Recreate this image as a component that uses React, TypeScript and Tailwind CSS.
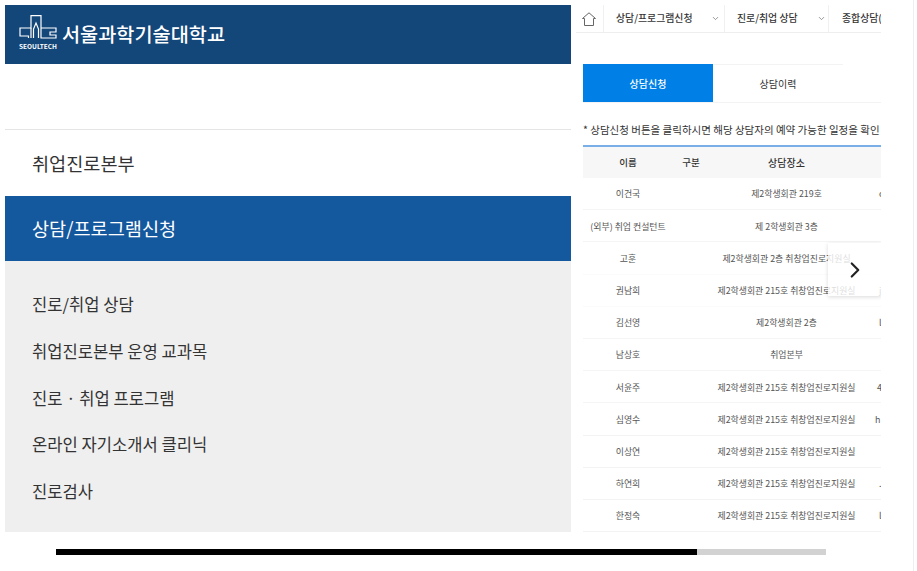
import { ChevronDown, ChevronRight } from "lucide-react";

const subMenus = [
  "진로/취업 상담",
  "취업진로본부 운영 교과목",
  "진로 · 취업 프로그램",
  "온라인 자기소개서 클리닉",
  "진로검사",
];

const rows = [
  { name: "이건국", place: "제2학생회관 219호", extra: "c", pad: "pl-[15px]", line: "border-[#f5f5f5]" },
  { name: "(외부) 취업 컨설턴트", place: "제 2학생회관 3층", extra: "", pad: "pl-0", line: "border-[#f5f5f5]" },
  { name: "고훈", place: "제2학생회관 2층 취창업진로지원실", extra: "", pad: "pl-0", line: "border-[#fbfbfb]" },
  { name: "권남희", place: "제2학생회관 215호 취창업진로지원실", extra: "j", pad: "pl-[15px]", line: "border-[#fbfbfb]" },
  { name: "김선영", place: "제2학생회관 2층", extra: "l", pad: "pl-[15px]", line: "border-[#f5f5f5]" },
  { name: "남상호", place: "취업본부", extra: "", pad: "pl-0", line: "border-[#f5f5f5]" },
  { name: "서윤주", place: "제2학생회관 215호 취창업진로지원실", extra: "4", pad: "pl-[13px]", line: "border-[#f5f5f5]" },
  { name: "심영수", place: "제2학생회관 215호 취창업진로지원실", extra: "h", pad: "pl-[11px]", line: "border-[#f3f3f3]" },
  { name: "이상연", place: "제2학생회관 215호 취창업진로지원실", extra: "", pad: "pl-0", line: "border-[#f3f3f3]" },
  { name: "하연희", place: "제2학생회관 215호 취창업진로지원실", extra: ".", pad: "pl-[15px]", line: "border-[#f3f3f3]" },
  { name: "한정숙", place: "제2학생회관 215호 취창업진로지원실", extra: "l", pad: "pl-[15px]", line: "border-[#f3f3f3]" },
];

function Logo() {
  return (
    <div className="flex flex-col items-center w-[38px] shrink-0 mb-[5px]">
      <svg width="38" height="24" viewBox="0 0 38 24" fill="none" stroke="white" strokeWidth="1.2">
        <path d="M9.5 23 V21 H1 V13 H12 V0.6 H22 V13 H37 V17 H31 V20 H37 V23 H22 V13" />
        <path d="M12 13 V23 M14.5 23 V14 L17 8 L19.5 14 V23" />
      </svg>
      <span className="mt-[4px] text-[6.5px] leading-[6px] font-bold text-white whitespace-nowrap">SEOULTECH</span>
    </div>
  );
}

function NavItem({ label, className, last }: { label: string; className: string; last?: boolean }) {
  return (
    <div className={`flex items-center shrink-0 h-full border-l border-[#f0f0f0] ${className}`}>
      <span className="text-[9.9px] font-medium text-[#333] whitespace-nowrap">{label}</span>
      {!last && <ChevronDown size={9} className="text-[#777]" />}
    </div>
  );
}

export default function App() {
  return (
    <div
      className="w-[914px] h-[571px] overflow-hidden border-r border-[#eee] bg-white pt-[5px] pl-[5px]"
      style={{ fontFamily: '"Noto Sans CJK KR", "Noto Sans", sans-serif' }}
    >
      <div className="flex gap-[5px] h-[527px]">
        <aside className="w-[566px] shrink-0 flex flex-col">
          <div className="h-[59px] bg-[#134679] flex items-center pl-[14px] gap-[5px]">
            <Logo />
            <span className="mb-[2px] text-[19.7px] font-medium text-white whitespace-nowrap">서울과학기술대학교</span>
          </div>
          <div className="h-[66px] border-b border-[#e5e5e5]" />
          <div className="h-[66px] flex items-center pl-[27px] pb-[1px] text-[18.6px] text-[#333]">취업진로본부</div>
          <div className="h-[65px] flex items-center pl-[27px] pb-[1px] text-[18.6px] text-white bg-[#14589e]">상담/프로그램신청</div>
          <ul className="flex-1 bg-[#efefef] pt-[20.5px] pl-[27px]">
            {subMenus.map((m) => (
              <li key={m} className="h-[46.6px] flex items-center text-[16.6px] text-[#333]">{m}</li>
            ))}
          </ul>
        </aside>

        <main className="relative w-[305px] shrink-0 overflow-hidden">
          <nav className="h-[28px] flex items-center border-b border-[#eee]">
            <div className="w-[27px] shrink-0 flex items-center pl-[6px]">
              <svg width="14" height="14" viewBox="0 0 14 14" fill="none" stroke="#666" strokeWidth="1">
                <path d="M0.5 6.5 L7 0.8 L13.5 6.5 H11.5 V13.5 H2.5 V6.5 Z" />
              </svg>
            </div>
            <NavItem label="상담/프로그램신청" className="w-[121px] pl-[12px] pr-[4px] justify-between" />
            <NavItem label="진로/취업 상담" className="w-[104px] pl-[12px] pr-[2px] justify-between" />
            <NavItem label="종합상담(" className="w-[53px] pl-[13px]" last />
          </nav>

          <div className="ml-[7px] mt-[31px] h-[39px] flex border-b border-[#f3f3f3]">
            <div className="w-[130px] flex items-center justify-center bg-[#0080e6] text-white text-[10px] font-medium">상담신청</div>
            <div className="w-[130px] flex items-center justify-center border-t border-[#f3f3f3] text-[#333] text-[10px]">상담이력</div>
          </div>

          <p className="ml-[7px] mt-[19px] h-[23px] text-[10.5px] leading-[16px] text-[#333] whitespace-nowrap">
            * 상담신청 버튼을 클릭하시면 해당 상담자의 예약 가능한 일정을 확인
          </p>

          <div className="ml-[7px] border-t-2 border-[#7aaee6]">
            <div className="h-[31px] flex items-center bg-[#f7f7f7] text-[9.5px] font-medium text-[#333]">
              <div className="w-[90px] text-center">이름</div>
              <div className="w-[36px] text-center">구분</div>
              <div className="w-[155px] text-center text-[10px]">상담장소</div>
            </div>
            {rows.map((r) => (
              <div key={r.name} className={`h-[32.2px] pt-[1px] flex items-center border-b ${r.line} text-[8.9px] text-[#555] whitespace-nowrap`}>
                <div className="w-[90px] shrink-0 text-center">{r.name}</div>
                <div className="w-[36px] shrink-0" />
                <div className="w-[155px] shrink-0 text-center">{r.place}</div>
                <div className={`shrink-0 ${r.pad}`}>{r.extra}</div>
              </div>
            ))}
          </div>

          <button className="absolute right-0 top-[238px] w-[53px] h-[53px] flex items-center justify-center bg-white/80 shadow-[0_1px_4px_rgba(0,0,0,0.15)]">
            <ChevronRight size={26} strokeWidth={2} className="text-[#222]" />
          </button>
        </main>
      </div>

      <div className="mt-[17px] ml-[51px] w-[770px] h-[6px] bg-[#d2d2d2]">
        <div className="w-[641px] h-full bg-black" />
      </div>
    </div>
  );
}
